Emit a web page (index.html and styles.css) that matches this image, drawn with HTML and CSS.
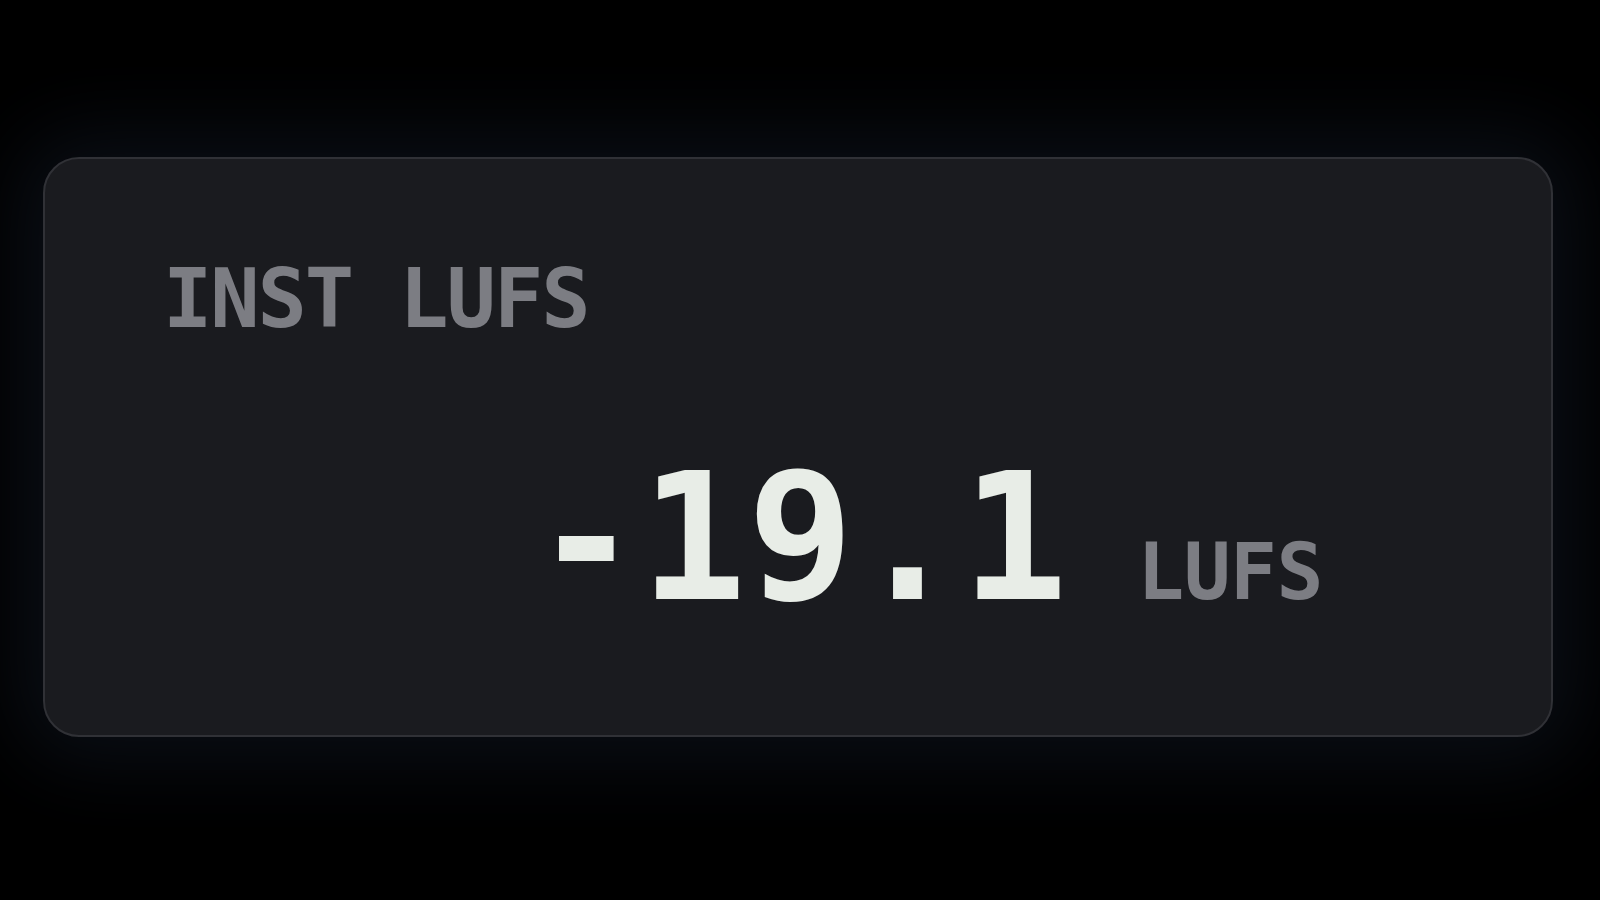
FILE: index.html
```html
<!DOCTYPE html>
<html lang="en">
<head>
<meta charset="utf-8">
<title>INST LUFS</title>
<link rel="stylesheet" href="styles.css">
</head>
<body>
<main class="stage">
  <section class="meter-card">
    <div class="meter-label">INST LUFS</div>
    <div class="meter-value-row">
      <span class="meter-value">-19.1</span>
      <span class="meter-unit">LUFS</span>
    </div>
  </section>
</main>
</body>
</html>
```

FILE: styles.css
```css
html, body {
  margin: 0;
  padding: 0;
  background: #000000;
}

.stage {
  width: 1600px;
  height: 900px;
  padding: 157px 0 0 43px;
  box-sizing: border-box;
  overflow: hidden;
}

.meter-card {
  width: 1510px;
  height: 580px;
  box-sizing: border-box;
  border: 2px solid #303136;
  border-radius: 36px;
  background: #1a1b1f;
  box-shadow: 0 0 80px 26px rgba(12, 18, 26, 0.8);
  padding: 99px 0 0 118px;
}

.meter-label {
  font-family: "DejaVu Sans Mono", "Liberation Mono", monospace;
  font-weight: 700;
  font-size: 82px;
  line-height: 1;
  letter-spacing: -2.1px;
  color: #7c7d83;
}

.meter-value-row {
  display: flex;
  align-items: baseline;
  margin-top: 110px;
  padding-left: 370px;
}

.meter-value {
  font-family: "DejaVu Sans Mono", "Liberation Mono", monospace;
  font-weight: 700;
  font-size: 177px;
  line-height: 1;
  letter-spacing: 0.5px;
  color: #e8ede7;
}

.meter-unit {
  font-family: "DejaVu Sans Mono", "Liberation Mono", monospace;
  font-weight: 700;
  font-size: 78px;
  line-height: 1;
  letter-spacing: -0.6px;
  color: #7c7d83;
  margin-left: 69px;
}
```
